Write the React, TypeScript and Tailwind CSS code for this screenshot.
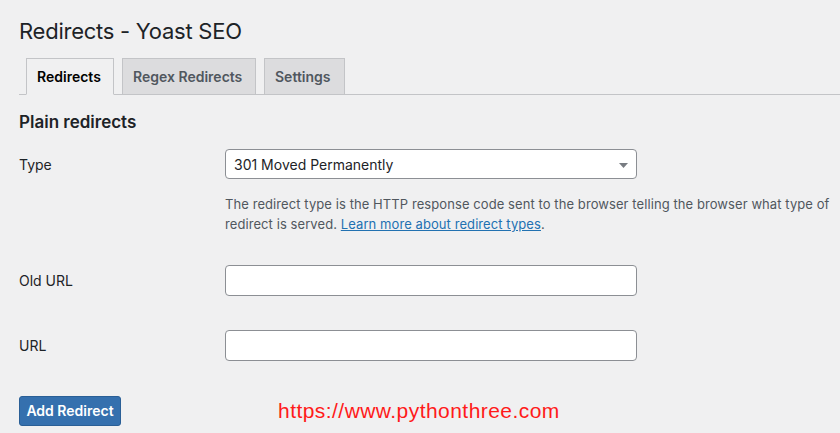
const font = "font-['Inter','Noto_Sans',sans-serif]";

function Tab({ label, active }: { label: string; active?: boolean }) {
  return (
    <div
      className={`-mb-px flex h-[37px] items-center border border-[#c3c4c7] px-[10px] text-[14px] font-semibold ${
        active ? "border-b-[#f0f0f1] bg-[#f0f0f1] text-[#000]" : "bg-[#dcdcde] text-[#50575e]"
      }`}
    >
      {label}
    </div>
  );
}

function Field({ label }: { label: string }) {
  return (
    <div className="flex items-center">
      <div className="w-[206px] text-[14px] text-[#1d2327]">{label}</div>
      <div className="h-[31px] w-[412px] rounded-[4px] border border-[#8c8f94] bg-white" />
    </div>
  );
}

export default function App() {
  return (
    <div className={`${font} h-[433px] w-[840px] overflow-hidden bg-[#f0f0f1] pl-[19px] pt-[16px] text-[#1d2327]`}>
      <h1 className="text-[22px] leading-[30px] font-normal tracking-[-0.25px]">Redirects - Yoast SEO</h1>

      {/* tabs */}
      <div className="mt-[12px] flex items-end gap-[8px] border-b border-[#c3c4c7] pl-[7px]">
        <div className="w-[88px]"><Tab label="Redirects" active /></div>
        <div className="w-[134px]"><Tab label="Regex Redirects" /></div>
        <div className="w-[81px]"><Tab label="Settings" /></div>
      </div>

      <h2 className="mt-[15px] text-[17px] leading-[24px] font-semibold">Plain redirects</h2>

      <div className="mt-[15px] flex items-center">
        <div className="w-[206px] text-[14px]">Type</div>
        <div className="relative flex h-[30px] w-[412px] items-center rounded-[4px] border border-[#8c8f94] bg-white px-[8px] text-[14px]">
          301 Moved Permanently
          <svg className="absolute right-[8px] top-[13px]" width="9" height="5" viewBox="0 0 9 5">
            <path d="M0 0h9L4.5 5z" fill="#787c82" />
          </svg>
        </div>
      </div>

      <p className="mt-[15px] ml-[206px] text-[13px] leading-[20px] tracking-[0.08px] text-[#50575e]">
        The redirect type is the HTTP response code sent to the browser telling the browser what type of
        <br />
        redirect is served.{" "}
        <a href="#" className="text-[#2271b1] underline">Learn more about redirect types</a>.
      </p>

      <div className="mt-[31px]"><Field label="Old URL" /></div>
      <div className="mt-[34px]"><Field label="URL" /></div>

      <div className="mt-[34px] flex items-center">
        <button className="h-[30px] w-[102px] rounded-[3px] border border-[#2a5f96] bg-[#3570ae] text-[14px] font-semibold text-white">
          Add Redirect
        </button>
        <span className="ml-[157px] font-['Liberation_Sans',Arial,sans-serif] text-[21px] tracking-[0.45px] text-[#ff1a1a]">
          https://www.pythonthree.com
        </span>
      </div>
    </div>
  );
}
